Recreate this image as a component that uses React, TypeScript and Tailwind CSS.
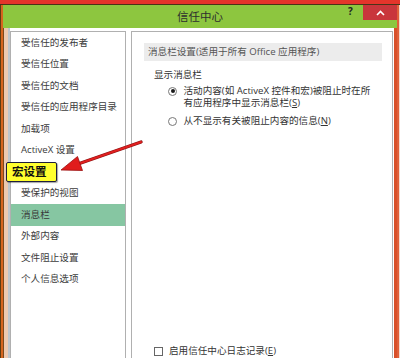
import React from "react";

const items = [
  "受信任的发布者",
  "受信任位置",
  "受信任的文档",
  "受信任的应用程序目录",
  "加载项",
  "ActiveX 设置",
  "宏设置",
  "受保护的视图",
  "消息栏",
  "外部内容",
  "文件阻止设置",
  "个人信息选项",
];

const font = { fontFamily: '"Open Sans", "Noto Sans CJK SC", sans-serif' };

export default function App() {
  return (
    <div
      className="relative w-[400px] h-[358px] overflow-hidden bg-white flex flex-col text-[#3a3a3a]"
      style={font}
    >
      <div className="h-[4px] bg-[#e4352b] shrink-0" />
      <div className="h-[1px] bg-[#4a3418] shrink-0" />
      <div className="flex flex-1 min-h-0">
        <div className="w-[1px] bg-[#5c3c12]" />
        <div className="w-[2px] bg-[#d6651e]" />
        <div className="flex-1 flex flex-col min-w-0">
          {/* title bar */}
          <div className="relative h-[23px] bg-[#8dc63f] flex items-center justify-center shrink-0">
            <span className="text-[11.5px] text-[#2e2e2e] leading-none">信任中心</span>
            <span className="absolute left-[345px] top-[1px] text-[10px] font-bold text-[#222] leading-none">?</span>
            <div className="absolute right-0 top-0 w-[34px] h-[15px] bg-[#c9363c] flex items-center justify-center">
              <svg width="9" height="6" viewBox="0 0 9 6">
                <path d="M1 5 L4.5 1.5 L8 5" stroke="#ffffff" strokeWidth="1.6" fill="none" />
              </svg>
            </div>
          </div>
          <div className="flex flex-1 min-h-0">
            <div className="w-[1px] bg-[#7a4a1e]" />
            <div className="w-[4px] bg-[#ecc9b0]" />
            <div className="w-[2px] bg-[#bcc5cd]" />
            <div className="flex-1 flex pt-[3px] gap-[5px] min-w-0">
              {/* left panel */}
              <div className="w-[116px] h-[330px] shrink-0 border border-[#b0b0b0] bg-white flex flex-col">
                {items.map((t) =>
                  t === "宏设置" ? (
                    <div key={t} className="h-[21.5px] shrink-0 relative">
                      {/* yellow highlight label over the list item */}
                      <div className="absolute left-[-5px] top-[0.5px] z-10 w-[51px] h-[20px] rounded-[2px] border border-[#1e1e3c] bg-[#ffff2e] flex items-center pl-[5px] text-[11.5px] font-bold text-[#111] leading-none shadow-[1px_1px_1px_rgba(0,0,0,0.35)]">
                        宏设置
                      </div>
                    </div>
                  ) : (
                    <div
                      key={t}
                      className={
                        "h-[21.5px] shrink-0 flex items-center pl-[10px] text-[9.6px] leading-none " +
                        (t === "消息栏" ? "bg-[#86c6a2] text-[#3a3a3a]" : "text-[#3c3c3c]")
                      }
                    >
                      {t}
                    </div>
                  )
                )}
              </div>
              {/* right panel */}
              <div className="w-[262px] h-[330px] shrink-0 border border-[#b0b0b0] bg-white flex flex-col">
                <div className="mt-[11px] ml-[12px] mr-[10px] h-[18px] bg-[#ececec] flex items-center pl-[4px] text-[9.6px] text-[#555] leading-none">
                  消息栏设置(适用于所有 Office 应用程序)
                </div>
                <div className="mt-[8px] ml-[22px] text-[9.6px] leading-[12px] text-[#333]">显示消息栏</div>
                <div className="mt-[4px] ml-[36px] flex items-start">
                  <div className="w-[9px] h-[9px] mt-[1.5px] shrink-0 rounded-full border border-[#777] bg-white flex items-center justify-center">
                    <div className="w-[4px] h-[4px] rounded-full bg-[#1a1a1a]" />
                  </div>
                  <div className="ml-[6.5px] text-[9.6px] leading-[12px] text-[#333]">
                    <div>活动内容(如 ActiveX 控件和宏)被阻止时在所</div>
                    <div>
                      有应用程序中显示消息栏(<u>S</u>)
                    </div>
                  </div>
                </div>
                <div className="mt-[6px] ml-[36px] flex items-start">
                  <div className="w-[9px] h-[9px] mt-[1.5px] shrink-0 rounded-full border border-[#777] bg-white" />
                  <div className="ml-[6.5px] text-[9.6px] leading-[12px] text-[#333]">
                    从不显示有关被阻止内容的信息(<u>N</u>)
                  </div>
                </div>
                <div className="flex-1" />
                <div className="mb-[4px] ml-[22px] flex items-center h-[10px]">
                  <div className="w-[9px] h-[9px] border border-[#666] bg-white shrink-0" />
                  <div className="ml-[6px] text-[9.6px] leading-none text-[#333]">
                    启用信任中心日志记录(<u>E</u>)
                  </div>
                </div>
              </div>
              <div className="w-[1px] bg-white" />
            </div>
            <div className="w-[3px] bg-[#d8502a]" />
          </div>
        </div>
        <div className="w-[2px] bg-[#e0603a]" />
        <div className="w-[1px] bg-[#f3d8cc]" />
      </div>

      {/* red arrow */}
      <svg className="absolute left-0 top-0 z-20 pointer-events-none" width="400" height="358" viewBox="0 0 400 358">
        <line x1="141" y1="142" x2="78" y2="164" stroke="#8a1010" strokeWidth="3.4" strokeLinecap="round" />
        <line x1="141" y1="142" x2="78" y2="164" stroke="#e02020" strokeWidth="2" strokeLinecap="round" />
        <polygon points="61,170 82.5,170.5 77.5,156.5" fill="#e01c1c" stroke="#9a1010" strokeWidth="0.8" />
      </svg>
    </div>
  );
}
